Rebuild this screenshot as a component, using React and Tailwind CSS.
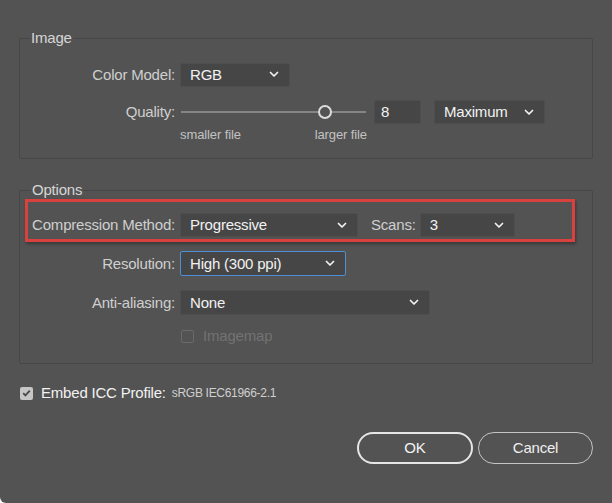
import React from 'react'

const Chevron = () => (
  <svg width="10" height="7" viewBox="0 0 10 7" className="shrink-0">
    <path d="M1.5 1.5l3.5 3.5 3.5-3.5" fill="none" stroke="#f2f2f2" strokeWidth="1.7" strokeLinecap="round" strokeLinejoin="round" />
  </svg>
);

const Select = ({ value, className, focused }) => (
  <div
    className={`flex items-center justify-between h-[24px] pl-[9px] pr-[10px] rounded-[2px] bg-[#464646] text-[#f2f2f2] ${
      focused ? 'border-[1.5px] border-[#4f8fd6]' : 'border border-[#4e4e4e]'
    } ${className}`}
  >
    <span>{value}</span>
    <Chevron />
  </div>
);

const Label = ({ children }) => (
  <div className="w-[155px] shrink-0 text-right text-[#cfcfcf]">{children}</div>
);

const App = () => {
  return (
    <div className="w-[612px] h-[503px] bg-[#535353] pt-[29px] px-[19px] rounded-bl-[6px] font-['Liberation_Sans',Arial,sans-serif] text-[15px] leading-[18px] tracking-[-0.2px] overflow-hidden">
      {/* Image */}
      <fieldset className="border border-[#474747] rounded-[2px] pb-[16px]">
        <legend className="ml-[10px] px-[1px] text-[#d6d6d6]">Image</legend>

        <div className="flex items-center h-[25px] mt-[15px]">
          <Label>Color Model:</Label>
          <Select value="RGB" className="ml-[5px] w-[110px]" />
        </div>

        <div className="flex items-start mt-[13px]">
          <div className="w-[155px] shrink-0 h-[24px] flex items-center justify-end text-[#cfcfcf]">Quality:</div>
          <div className="ml-[5px] flex flex-col">
            <div className="flex items-center h-[24px]">
              <div className="relative w-[186px] h-[24px]">
                <div className="absolute left-[1px] right-0 top-[11px] h-[2px] bg-[#858585]" />
                <div className="absolute left-[138px] top-[5px] w-[14px] h-[14px] rounded-full border-2 border-[#dcdcdc] bg-[#535353]" />
              </div>
              <div className="ml-[8px] w-[47px] h-[24px] pl-[6px] flex items-center bg-[#464646] border border-[#4e4e4e] rounded-[2px] text-[#f2f2f2]">8</div>
              <Select value="Maximum" className="ml-[13px] w-[111px]" />
            </div>
            <div className="flex justify-between w-[187px] mt-[4px] text-[13px] leading-[14px] tracking-[-0.1px] text-[#c2c2c2]">
              <span>smaller file</span>
              <span>larger file</span>
            </div>
          </div>
        </div>
      </fieldset>

      {/* Options */}
      <fieldset className="mt-[22px] border border-[#474747] rounded-[2px] pb-[20px]">
        <legend className="ml-[11px] px-[1px] text-[#d6d6d6]">Options</legend>

        <div className="relative flex items-center h-[24px] mt-[14px]">
          <Label>Compression Method:</Label>
          <Select value="Progressive" className="ml-[5px] w-[178px]" />
          <span className="ml-[13px] text-[#cfcfcf]">Scans:</span>
          <Select value="3" className="ml-[4px] w-[95px]" />
          <div className="absolute left-[5px] top-[-14px] w-[550px] h-[43px] border-[3px] border-[#d9413f] shadow-[1px_2px_3px_rgba(0,0,0,0.35)] pointer-events-none" />
        </div>

        <div className="flex items-center h-[25px] mt-[14px]">
          <Label>Resolution:</Label>
          <Select value="High (300 ppi)" focused className="ml-[5px] w-[166px] h-[25px]" />
        </div>

        <div className="flex items-center h-[25px] mt-[14px]">
          <Label>Anti-aliasing:</Label>
          <Select value="None" className="ml-[5px] w-[250px] h-[25px]" />
        </div>

        <div className="flex items-center h-[14px] mt-[14px] ml-[161px]">
          <div className="w-[13px] h-[13px] border border-[#6a6a6a] rounded-[2px]" />
          <span className="ml-[9px] text-[#727272]">Imagemap</span>
        </div>
      </fieldset>

      {/* Embed ICC */}
      <div className="flex items-center h-[14px] mt-[22px] ml-[1px]">
        <div className="w-[13px] h-[13px] rounded-[2px] bg-[#c6c6c6] flex items-center justify-center">
          <svg width="9" height="8" viewBox="0 0 9 8">
            <path d="M1.2 4.2l2.2 2.2L7.8 1.6" fill="none" stroke="#4a4a4a" strokeWidth="1.8" />
          </svg>
        </div>
        <span className="ml-[8px] text-[#f2f2f2]">Embed ICC Profile:</span>
        <span className="ml-[6px] text-[12px] tracking-[-0.3px] text-[#cfcfcf]">sRGB IEC61966-2.1</span>
      </div>

      {/* Buttons */}
      <div className="flex justify-end gap-[5px] mt-[32px]">
        <button className="w-[116px] h-[32px] rounded-full border-2 border-[#e6e6e6] text-[#f4f4f4]">OK</button>
        <button className="w-[115px] h-[32px] rounded-full border-[1.5px] border-[#c4c4c4] text-[#eeeeee]">Cancel</button>
      </div>
    </div>
  );
};

export default App
